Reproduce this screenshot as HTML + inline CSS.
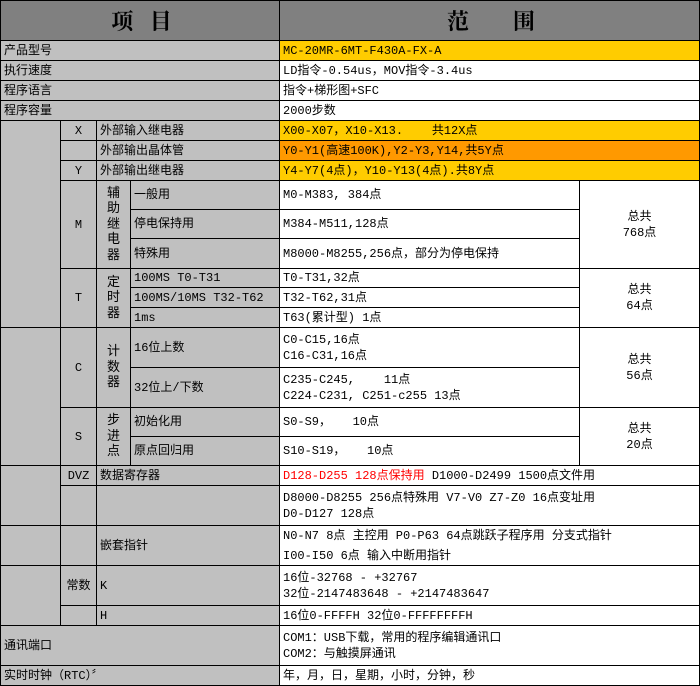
<!DOCTYPE html>
<html><head><meta charset="utf-8"><style>
body{margin:0;width:700px;height:686px;background:#fff;position:relative;overflow:hidden;font-family:"Liberation Mono","Noto Sans CJK SC",monospace;font-size:12px;color:#000}
.c{position:absolute;box-sizing:border-box;border:1px solid #000;display:flex;align-items:center;padding-left:3px;line-height:16px;white-space:nowrap;background:#fff}
.g{background:#c0c0c0}.h{background:#808080;justify-content:center;font-family:"Noto Serif CJK SC",serif;font-weight:bold;font-size:22px}
.y{background:#ffcc00}.o{background:#ff9900}.m{justify-content:center;padding-left:0;text-align:center}
.v{justify-content:center;padding-left:0;text-align:center;font-size:13px;line-height:15.5px}
.r{color:#f00}
</style></head><body>
<div class="c h" style="left:0;top:0;width:280px;height:41px">项&nbsp;&nbsp;&nbsp;目</div>
<div class="c h" style="left:279px;top:0;width:421px;height:41px">范&nbsp;&nbsp;&nbsp;&nbsp;&nbsp;&nbsp;&nbsp;&nbsp;围</div>

<div class="c g" style="left:0;top:40px;width:280px;height:21px">产品型号</div>
<div class="c y" style="left:279px;top:40px;width:421px;height:21px">MC-20MR-6MT-F430A-FX-A</div>
<div class="c g" style="left:0;top:60px;width:280px;height:21px">执行速度</div>
<div class="c" style="left:279px;top:60px;width:421px;height:21px">LD指令-0.54us，MOV指令-3.4us</div>
<div class="c g" style="left:0;top:80px;width:280px;height:21px">程序语言</div>
<div class="c" style="left:279px;top:80px;width:421px;height:21px">指令+梯形图+SFC</div>
<div class="c g" style="left:0;top:100px;width:280px;height:21px">程序容量</div>
<div class="c" style="left:279px;top:100px;width:421px;height:21px">2000步数</div>

<div class="c g" style="left:0;top:120px;width:61px;height:208px"></div>
<div class="c g m" style="left:60px;top:120px;width:37px;height:21px">X</div>
<div class="c g" style="left:96px;top:120px;width:184px;height:21px">外部输入继电器</div>
<div class="c y" style="left:279px;top:120px;width:421px;height:21px">X00-X07，X10-X13.&nbsp;&nbsp;&nbsp;&nbsp;共12X点</div>
<div class="c g" style="left:60px;top:140px;width:37px;height:21px"></div>
<div class="c g" style="left:96px;top:140px;width:184px;height:21px">外部输出晶体管</div>
<div class="c o" style="left:279px;top:140px;width:421px;height:21px">Y0-Y1(高速100K),Y2-Y3,Y14,共5Y点</div>
<div class="c g m" style="left:60px;top:160px;width:37px;height:21px">Y</div>
<div class="c g" style="left:96px;top:160px;width:184px;height:21px">外部输出继电器</div>
<div class="c y" style="left:279px;top:160px;width:421px;height:21px">Y4-Y7(4点)，Y10-Y13(4点).共8Y点</div>

<div class="c g m" style="left:60px;top:180px;width:37px;height:89px">M</div>
<div class="c g v" style="left:96px;top:180px;width:35px;height:89px">辅<br>助<br>继<br>电<br>器</div>
<div class="c g" style="left:130px;top:180px;width:150px;height:30px">一般用</div>
<div class="c" style="left:279px;top:180px;width:301px;height:30px">M0-M383, 384点</div>
<div class="c g" style="left:130px;top:209px;width:150px;height:30px">停电保持用</div>
<div class="c" style="left:279px;top:209px;width:301px;height:30px">M384-M511,128点</div>
<div class="c g" style="left:130px;top:238px;width:150px;height:31px">特殊用</div>
<div class="c" style="left:279px;top:238px;width:301px;height:31px">M8000-M8255,256点，部分为停电保持</div>
<div class="c m" style="left:579px;top:180px;width:121px;height:89px">总共<br>768点</div>

<div class="c g m" style="left:60px;top:268px;width:37px;height:60px">T</div>
<div class="c g v" style="left:96px;top:268px;width:35px;height:60px">定<br>时<br>器</div>
<div class="c g" style="left:130px;top:268px;width:150px;height:20px">100MS T0-T31</div>
<div class="c" style="left:279px;top:268px;width:301px;height:20px">T0-T31,32点</div>
<div class="c g" style="left:130px;top:287px;width:150px;height:21px">100MS/10MS T32-T62</div>
<div class="c" style="left:279px;top:287px;width:301px;height:21px">T32-T62,31点</div>
<div class="c g" style="left:130px;top:307px;width:150px;height:21px">1ms</div>
<div class="c" style="left:279px;top:307px;width:301px;height:21px">T63(累计型) 1点</div>
<div class="c m" style="left:579px;top:268px;width:121px;height:60px">总共<br>64点</div>

<div class="c g" style="left:0;top:327px;width:61px;height:139px"></div>
<div class="c g m" style="left:60px;top:327px;width:37px;height:81px">C</div>
<div class="c g v" style="left:96px;top:327px;width:35px;height:81px">计<br>数<br>器</div>
<div class="c g" style="left:130px;top:327px;width:150px;height:41px">16位上数</div>
<div class="c" style="left:279px;top:327px;width:301px;height:41px">C0-C15,16点<br>C16-C31,16点</div>
<div class="c g" style="left:130px;top:367px;width:150px;height:41px">32位上/下数</div>
<div class="c" style="left:279px;top:367px;width:301px;height:41px">C235-C245,&nbsp;&nbsp;&nbsp;&nbsp;11点<br>C224-C231, C251-c255 13点</div>
<div class="c m" style="left:579px;top:327px;width:121px;height:81px">总共<br>56点</div>

<div class="c g m" style="left:60px;top:407px;width:37px;height:59px">S</div>
<div class="c g v" style="left:96px;top:407px;width:35px;height:59px">步<br>进<br>点</div>
<div class="c g" style="left:130px;top:407px;width:150px;height:30px">初始化用</div>
<div class="c" style="left:279px;top:407px;width:301px;height:30px">S0-S9，&nbsp;&nbsp;&nbsp;10点</div>
<div class="c g" style="left:130px;top:436px;width:150px;height:30px">原点回归用</div>
<div class="c" style="left:279px;top:436px;width:301px;height:30px">S10-S19，&nbsp;&nbsp;&nbsp;10点</div>
<div class="c m" style="left:579px;top:407px;width:121px;height:59px">总共<br>20点</div>

<div class="c g" style="left:0;top:465px;width:61px;height:61px"></div>
<div class="c g m" style="left:60px;top:465px;width:37px;height:21px">DVZ</div>
<div class="c g" style="left:96px;top:465px;width:184px;height:21px">数据寄存器</div>
<div class="c" style="left:279px;top:465px;width:421px;height:21px"><span class="r">D128-D255 128点保持用</span>&nbsp;D1000-D2499 1500点文件用</div>
<div class="c g" style="left:60px;top:485px;width:37px;height:41px"></div>
<div class="c g" style="left:96px;top:485px;width:184px;height:41px"></div>
<div class="c" style="left:279px;top:485px;width:421px;height:41px">D8000-D8255 256点特殊用 V7-V0 Z7-Z0 16点变址用<br>D0-D127 128点</div>

<div class="c g" style="left:0;top:525px;width:61px;height:41px"></div>
<div class="c g" style="left:60px;top:525px;width:37px;height:41px"></div>
<div class="c g" style="left:96px;top:525px;width:184px;height:41px">嵌套指针</div>
<div class="c" style="left:279px;top:525px;width:421px;height:41px;line-height:20px">N0-N7 8点 主控用 P0-P63 64点跳跃子程序用 分支式指针<br>I00-I50 6点 输入中断用指针</div>

<div class="c g" style="left:0;top:565px;width:61px;height:61px"></div>
<div class="c g m" style="left:60px;top:565px;width:37px;height:41px">常数</div>
<div class="c g" style="left:96px;top:565px;width:184px;height:41px">K</div>
<div class="c" style="left:279px;top:565px;width:421px;height:41px">16位-32768 - +32767<br>32位-2147483648 - +2147483647</div>
<div class="c g" style="left:60px;top:605px;width:37px;height:21px"></div>
<div class="c g" style="left:96px;top:605px;width:184px;height:21px">H</div>
<div class="c" style="left:279px;top:605px;width:421px;height:21px">16位0-FFFFH 32位0-FFFFFFFFH</div>

<div class="c g" style="left:0;top:625px;width:280px;height:41px">通讯端口</div>
<div class="c" style="left:279px;top:625px;width:421px;height:41px">COM1：USB下载，常用的程序编辑通讯口<br>COM2：与触摸屏通讯</div>
<div class="c g" style="left:0;top:665px;width:280px;height:21px">实时时钟（RTC）〞</div>
<div class="c" style="left:279px;top:665px;width:421px;height:21px">年，月，日，星期，小时，分钟，秒</div>
</body></html>
